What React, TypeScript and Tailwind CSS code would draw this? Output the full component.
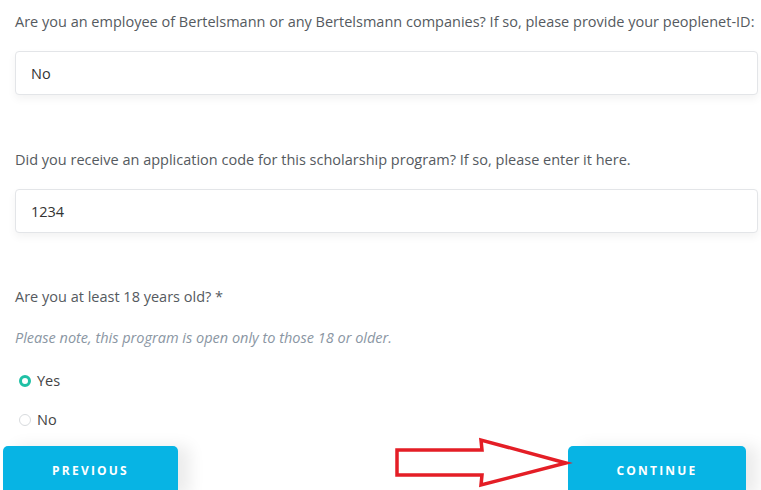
import React from "react";

const font = { fontFamily: '"Open Sans", "Noto Sans", sans-serif' };

export default function App() {
  return (
    <div className="relative w-[761px] h-[490px] overflow-hidden bg-white" style={font}>
      <div className="px-[15px] pt-[11px] pr-[3px]">
        <div className="text-[14.5px] leading-[22px] text-[#555a60] whitespace-nowrap">
          Are you an employee of Bertelsmann or any Bertelsmann companies? If so, please provide your peoplenet-ID:
        </div>
        <div className="mt-[18px] h-[44px] rounded-[4px] border border-[#e3e5e8] bg-white shadow-[0_4px_8px_rgba(0,0,0,0.05)] flex items-center px-[15px] pt-[2px] text-[14.5px] text-[#333]">
          No
        </div>

        <div className="mt-[54px] text-[14.5px] leading-[22px] text-[#555a60]">
          Did you receive an application code for this scholarship program? If so, please enter it here.
        </div>
        <div className="mt-[18px] h-[44px] rounded-[4px] border border-[#e3e5e8] bg-white shadow-[0_4px_8px_rgba(0,0,0,0.05)] flex items-center px-[15px] pt-[2px] text-[14.5px] text-[#333]">
          1234
        </div>

        <div className="mt-[53px] text-[14.5px] leading-[22px] text-[#555a60]">Are you at least 18 years old? *</div>
        <div className="mt-[19px] text-[14.5px] leading-[22px] italic text-[#8a96a3]">
          Please note, this program is open only to those 18 or older.
        </div>
        <div className="mt-[21px] flex items-center h-[22px] text-[14.5px] text-[#444]">
          <span className="ml-[4px] w-[12px] h-[12px] rounded-full border-[3.5px] border-[#1fc0a5] bg-white" />
          <span className="ml-[6px]">Yes</span>
        </div>
        <div className="mt-[17px] flex items-center h-[22px] text-[14.5px] text-[#444]">
          <span className="ml-[4px] w-[12px] h-[12px] rounded-full border border-[#d8dbde] bg-white" />
          <span className="ml-[6px]">No</span>
        </div>
      </div>

      <div className="absolute left-0 right-0 top-[446px] flex justify-between px-[3px] pr-[15px]">
        <button className="w-[175px] h-[50px] rounded-t-[5px] bg-[#07b4e4] text-white text-[12px] font-bold tracking-[2.2px] pb-[1px] shadow-[12px_0_16px_rgba(0,0,0,0.08)]" style={font}>
          PREVIOUS
        </button>
        <button className="w-[178px] h-[50px] rounded-t-[5px] bg-[#07b4e4] text-white text-[12px] font-bold tracking-[2.2px] pb-[1px] shadow-[12px_0_16px_rgba(0,0,0,0.08)]" style={font}>
          CONTINUE
        </button>
      </div>

      <svg className="absolute left-0 top-0 pointer-events-none" width="761" height="490">
        <polygon
          points="397,450 482,450 481,440 566,463 481,485 482,475 397,475"
          fill="none"
          stroke="#e41e26"
          strokeWidth="3.5"
          strokeLinejoin="miter"
        />
      </svg>
    </div>
  );
}
